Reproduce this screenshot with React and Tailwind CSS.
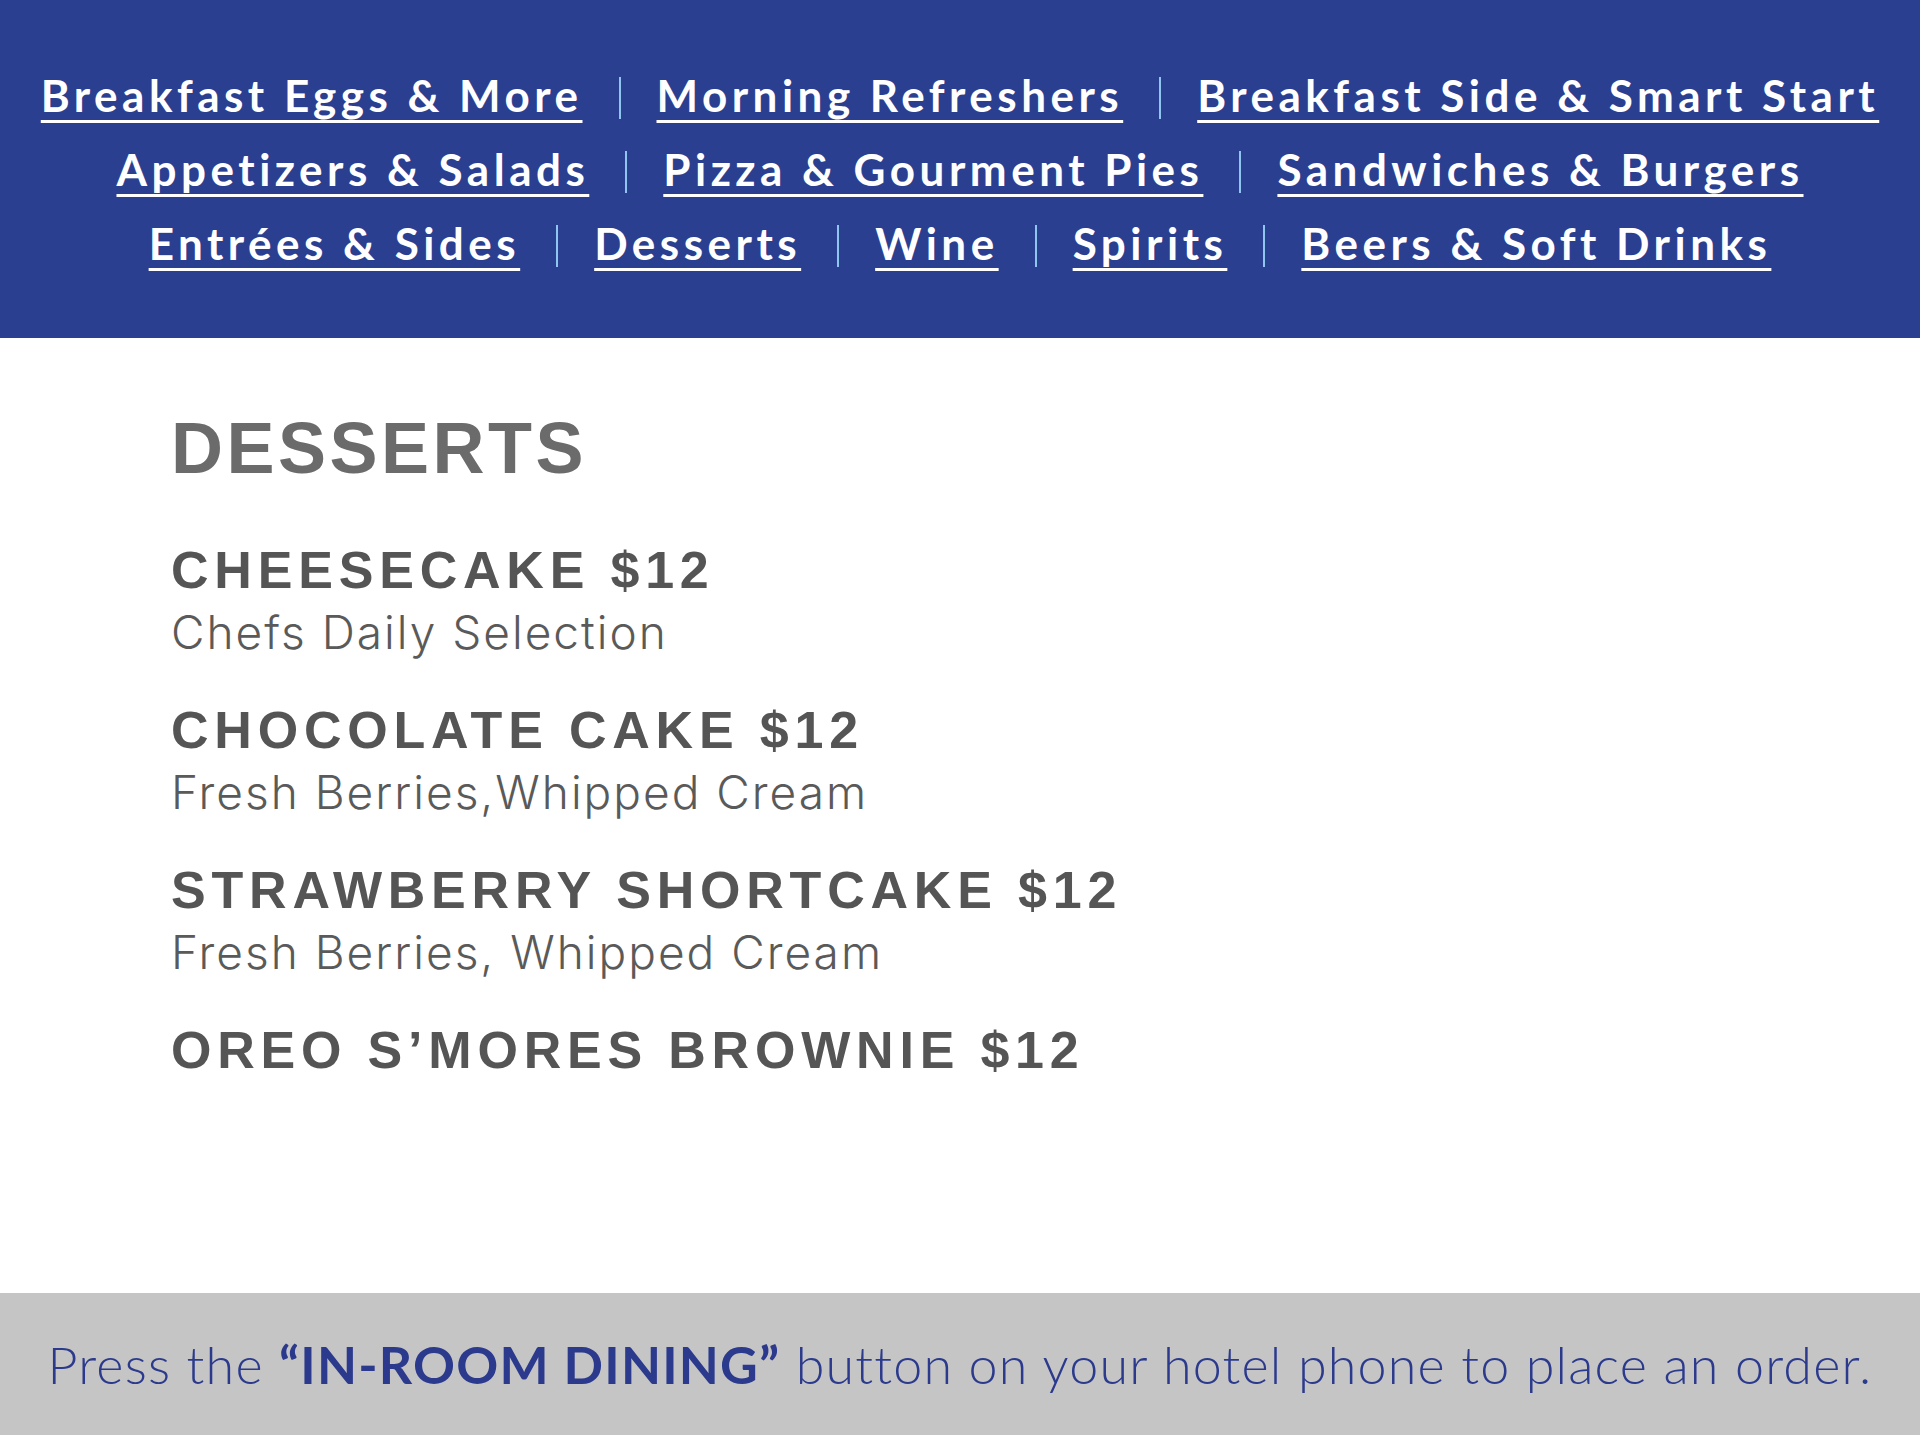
import React from 'react';

const navRows = [
  ['Breakfast Eggs & More', 'Morning Refreshers', 'Breakfast Side & Smart Start'],
  ['Appetizers & Salads', 'Pizza & Gourment Pies', 'Sandwiches & Burgers'],
  ['Entrées & Sides', 'Desserts', 'Wine', 'Spirits', 'Beers & Soft Drinks'],
];

const desserts = [
  { name: 'CHEESECAKE $12', desc: 'Chefs Daily Selection' },
  { name: 'CHOCOLATE CAKE $12', desc: 'Fresh Berries,Whipped Cream' },
  { name: 'STRAWBERRY SHORTCAKE $12', desc: 'Fresh Berries, Whipped Cream' },
  { name: 'OREO S’MORES BROWNIE $12', desc: '' },
];

const NavRow = ({ items }) => (
  <div className="flex items-center justify-center h-[74px]">
    {items.map((label, idx) => (
      <React.Fragment key={label}>
        {idx > 0 && <span className="w-[2px] h-[42px] mx-[36px] mt-[6px] bg-[#8ec6f0]" />}
        <a
          href="#"
          className="text-white text-[44px] font-bold tracking-[4.5px] underline decoration-[3px] underline-offset-[8px] leading-none"
          style={{ fontFamily: 'Lato, "Open Sans", sans-serif' }}
        >
          {label}
        </a>
      </React.Fragment>
    ))}
  </div>
);

export default function App() {
  return (
    <div className="w-[1920px] h-[1435px] flex flex-col bg-white">
      {/* category navigation */}
      <header className="h-[338px] bg-[#2b3f91] flex flex-col justify-center">
        {navRows.map((row, i) => (
          <NavRow key={i} items={row} />
        ))}
      </header>

      {/* menu section */}
      <main className="flex-1 pl-[171px] pt-[74px]">
        <h1
          className="text-[72px] leading-[72px] font-bold tracking-[3.5px] text-[#6b6b6b]"
          style={{ fontFamily: '"Liberation Sans", Arial, sans-serif' }}
        >
          DESSERTS
        </h1>
        <div className="mt-[57px] flex flex-col gap-[39px]">
          {desserts.map((item) => (
            <div key={item.name}>
              <div
                className="text-[52px] leading-[58px] font-bold tracking-[5.8px] text-[#555555]"
                style={{ fontFamily: '"Liberation Sans", Arial, sans-serif' }}
              >
                {item.name}
              </div>
              {item.desc && (
                <div
                  className="mt-[3px] text-[46px] leading-[60px] font-light tracking-[2px] text-[#5a5a5a]"
                  style={{ fontFamily: 'Inter, "Noto Sans", sans-serif' }}
                >
                  {item.desc}
                </div>
              )}
            </div>
          ))}
        </div>
      </main>

      {/* order footer */}
      <footer className="h-[142px] bg-[#c5c5c5] flex items-center justify-center">
        <p
          className="text-[52px] font-light tracking-[1.2px] text-[#2b3a8c] leading-none"
          style={{ fontFamily: 'Lato, "Open Sans", sans-serif' }}
        >
          Press the <span className="font-bold">“IN-ROOM DINING”</span> button on your hotel phone to place an order.
        </p>
      </footer>
    </div>
  );
}
